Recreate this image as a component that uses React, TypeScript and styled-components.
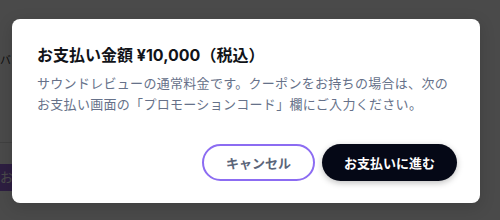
import styled, { createGlobalStyle } from 'styled-components';

const GlobalStyle = createGlobalStyle`
  html, body {
    margin: 0;
    padding: 0;
    width: 500px;
    height: 220px;
    overflow: hidden;
    background: #ffffff;
  }

  body {
    font-family: "Inter", "Noto Sans CJK JP", sans-serif;
    -webkit-font-smoothing: antialiased;
  }
`;

const App = () => (
  <Page>
    <GlobalStyle />
    <Backdrop>
      <BackText>バック</BackText>
      <Divider />
      <BackButton>お支払い</BackButton>
    </Backdrop>
    <Overlay>
      <Modal role="dialog">
        <Title>お支払い金額 ¥10,000（税込）</Title>
        <Description>
          サウンドレビューの通常料金です。クーポンをお持ちの場合は、次のお支払い画面の「プロモーションコード」欄にご入力ください。
        </Description>
        <Actions>
          <Button variant="outline">キャンセル</Button>
          <Button variant="primary">お支払いに進む</Button>
        </Actions>
      </Modal>
    </Overlay>
  </Page>
);
export default App;

type ButtonProps = {
  variant: 'outline' | 'primary';
}

const Page = styled.div`
  position: relative;
  width: 500px;
  height: 220px;
  overflow: hidden;
`;

const Backdrop = styled.div`
  display: flex;
  flex-direction: column;
  width: 200px;
  height: 100%;
  padding-top: 52px;
  box-sizing: border-box;
`;

const BackText = styled.span`
  font-size: 11px;
  line-height: 16px;
  color: #333;
`;

const Divider = styled.hr`
  margin: 74px 0 0;
  border: 0;
  border-top: 1px solid #dcdcdc;
`;

const BackButton = styled.div`
  margin-top: 21px;
  height: 27px;
  background: #9a68e0;
  color: #fff;
  font-size: 13px;
  line-height: 27px;
`;

const Overlay = styled.div`
  position: absolute;
  inset: 0;
  display: flex;
  align-items: center;
  padding-left: 12px;
  background: rgba(0, 0, 0, 0.71);
`;

const Modal = styled.div`
  display: flex;
  flex-direction: column;
  width: 468px;
  height: 184px;
  margin-top: 2px;
  padding: 24px 23px 22px 25px;
  box-sizing: border-box;

  background: #ffffff;
  border-radius: 8px;
  box-shadow: 0 4px 16px rgba(0, 0, 0, 0.15);
`;

const Title = styled.h2`
  margin: 0;

  font-size: 16px;
  font-weight: 700;
  line-height: 24px;
  color: #111318;
`;

const Description = styled.p`
  margin: 6px 0 0;

  font-size: 13px;
  line-height: 21px;
  letter-spacing: 0.3px;
  color: #667189;
`;

const Actions = styled.div`
  display: flex;
  justify-content: flex-end;
  gap: 7px;
  margin-top: 29px;
`;

const Button = styled.button<ButtonProps>`
  height: 37px;
  padding: 0 22px;
  box-sizing: border-box;

  font-family: inherit;
  font-size: 13px;
  font-weight: 700;
  border-radius: 999px;
  cursor: pointer;

  ${({ variant }) => (variant === 'outline'
    ? `
      background: #ffffff;
      color: #5b6579;
      border: 2px solid #8c6cf2;
    `
    : `
      background: #050816;
      color: #ffffff;
      border: 0;
      box-shadow: 0 2px 6px rgba(0, 0, 0, 0.25);
    `)}
`;
